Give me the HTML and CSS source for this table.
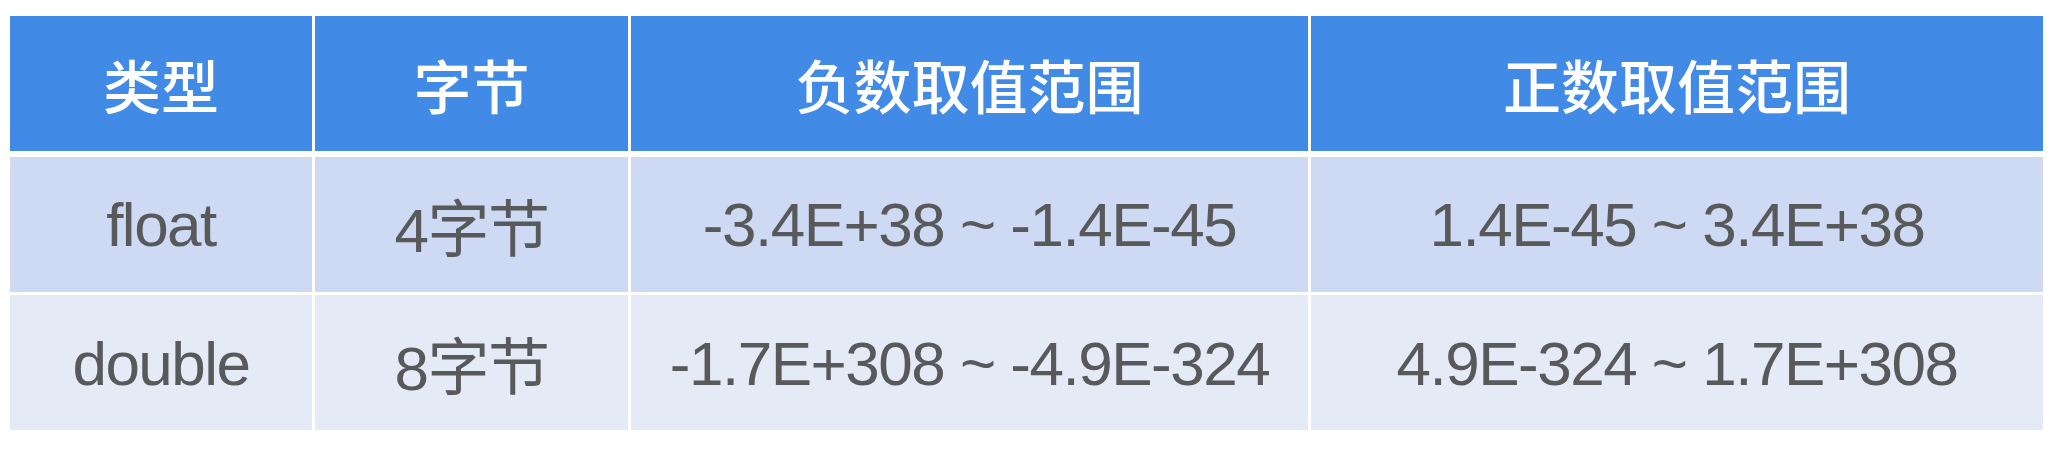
FILE: index.html
```html
<!DOCTYPE html>
<html lang="zh">
<head>
<meta charset="utf-8">
<link rel="stylesheet" href="styles.css">
</head>
<body>
<div class="table">
  <div class="row head">
    <div class="cell">类型</div>
    <div class="cell">字节</div>
    <div class="cell">负数取值范围</div>
    <div class="cell">正数取值范围</div>
  </div>
  <div class="row odd">
    <div class="cell">float</div>
    <div class="cell">4字节</div>
    <div class="cell">-3.4E+38 ~ -1.4E-45</div>
    <div class="cell">1.4E-45 ~ 3.4E+38</div>
  </div>
  <div class="row even">
    <div class="cell">double</div>
    <div class="cell">8字节</div>
    <div class="cell">-1.7E+308 ~ -4.9E-324</div>
    <div class="cell">4.9E-324 ~ 1.7E+308</div>
  </div>
</div>
</body>
</html>
```

FILE: styles.css
```css
html, body {
  margin: 0;
  background: #ffffff;
}
body {
  padding: 16px 0 0 10px;
}
.table {
  width: 2033px;
  display: flex;
  flex-direction: column;
  gap: 3px;
}
.row {
  display: grid;
  grid-template-columns: 302px 313px 677px 732px;
  column-gap: 3px;
  height: 135px;
}
.row.head {
  margin-bottom: 3px;
}
.cell {
  display: flex;
  align-items: center;
  justify-content: center;
  font-family: "Liberation Sans", "Noto Sans CJK SC", sans-serif;
  font-size: 62px;
  color: #58595b;
  letter-spacing: -1.5px;
}
.head .cell {
  background: #418ae6;
  color: #ffffff;
  font-family: "Noto Sans CJK SC", sans-serif;
  font-weight: 500;
  font-size: 58px;
  letter-spacing: 0;
}
.odd .cell {
  background: #cedaf3;
}
.even .cell {
  background: #e5eaf7;
  height: 136px;
}
```
